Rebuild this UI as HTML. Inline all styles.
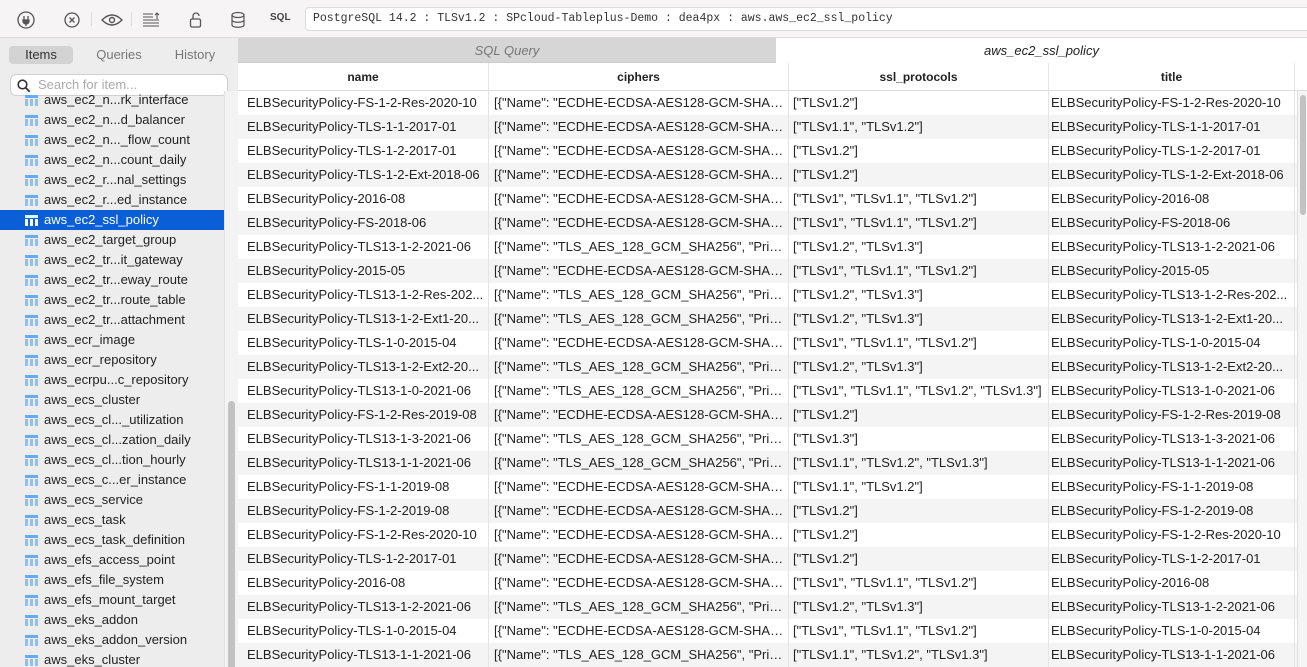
<!DOCTYPE html><html><head><style>
*{margin:0;padding:0;box-sizing:border-box}
body{width:1307px;height:667px;overflow:hidden;font-family:"Liberation Sans",sans-serif;font-size:13px;color:#222;background:#fff;position:relative}
.tb{position:absolute;left:0;top:0;width:1307px;height:38px;background:#f6f4f4;border-bottom:1px solid #dcdcdc}
.ic{position:absolute;top:10px}
.addr{position:absolute;left:305px;top:7px;width:1010px;height:24px;background:#fff;border:1px solid #dcdcdc;border-radius:4px;font-family:"Liberation Mono",monospace;font-size:11.5px;line-height:22px;padding-left:7px;color:#333}
.sb{position:absolute;left:0;top:38px;width:238px;height:629px;background:#ededed;overflow:hidden}
.tabs{position:absolute;top:8px;left:9px;width:220px;height:18px}
.tabs span{position:absolute;top:0;height:18px;line-height:18px;text-align:center;color:#777;font-size:13px}
.search{position:absolute;left:10px;top:36px;width:218px;height:22px;background:#fff;border:1px solid #d0d0d0;border-radius:6px;color:#aaa;line-height:20px;padding-left:27px}
.list{position:absolute;top:52px;left:0;width:224px}
.it{height:20px;line-height:20px;padding-left:44px;position:relative;font-size:13px;color:#222;white-space:nowrap}
.it i{position:absolute;left:25px;top:5px;width:13px;height:11px;background:linear-gradient(#6aaaf0,#6aaaf0) 0 0/13px 3px no-repeat,repeating-linear-gradient(90deg,#8fbff3 0 3px,transparent 3px 5px) 0 4px/13px 7px no-repeat}
.it.sel{background:#0a5fd6;color:#fff}
.strack{position:absolute;left:224px;top:53px;width:14px;height:580px;background:#f3f3f3;border-left:1px solid #e2e2e2}
.thumb{position:absolute;left:228px;top:363px;width:7px;height:270px;background:#c2c2c2;border-radius:4px}
.main{position:absolute;left:238px;top:38px;width:1069px;height:629px}
.tab1{position:absolute;left:0;top:0;width:538px;height:25px;background:#d6d6d6;color:#777;font-style:italic;text-align:center;line-height:25px;border-bottom:1px solid #ccc}
.tab2{position:absolute;left:538px;top:0;width:531px;height:25px;background:#fff;font-style:italic;text-align:center;line-height:25px;color:#222}
.hd{position:absolute;left:0;top:25px;width:1069px;height:28px;border-bottom:1px solid #ddd;background:#fff}
.hd span{position:absolute;top:0;line-height:28px;text-align:center;font-weight:bold;font-size:12px;border-right:1px solid #e4e4e4;height:28px}
.rows{position:absolute;left:0;top:53px;width:1060px}
.r{height:24px;position:relative;white-space:nowrap}
.r:nth-child(even){background:#f3f4f3}
.r span{position:absolute;top:0;line-height:24px;overflow:hidden;text-overflow:ellipsis;padding-left:9px;padding-right:4px;border-right:1px solid #e4e4e4;height:24px}
.c1{left:0;width:251px}.c2{left:251px;width:300px;padding-left:5px!important}.c3{left:551px;width:260px;padding-left:4px!important}.c4{left:811px;width:246px;padding-left:2px!important}
.vs{position:absolute;left:1297px;top:91px;width:10px;height:576px;background:#f5f5f5;border-left:1px solid #e0e0e0}
.vs div{position:absolute;left:2px;top:4px;width:6px;height:120px;background:#c2c2c2;border-radius:3px}
</style></head><body>
<div class="tb">
<svg class="ic" style="left:16px" width="20" height="20" viewBox="0 0 20 20"><circle cx="10" cy="10" r="8" fill="none" stroke="#555" stroke-width="1.3"/><path d="M8 6v4M12 6v4M7 10h6v1a3 3 0 0 1-6 0zM10 14v2" stroke="#555" stroke-width="1.3" fill="#555"/></svg>
<svg class="ic" style="left:62px" width="20" height="20" viewBox="0 0 20 20"><circle cx="10" cy="10" r="7" fill="none" stroke="#555" stroke-width="1.3"/><path d="M7.5 7.5l5 5M12.5 7.5l-5 5" stroke="#555" stroke-width="1.3"/></svg>
<div style="position:absolute;left:91px;top:12px;width:1px;height:14px;background:#ddd"></div>
<svg class="ic" style="left:100px" width="24" height="20" viewBox="0 0 24 20"><path d="M2 10q10-10 20 0q-10 10-20 0z" fill="none" stroke="#555" stroke-width="1.4"/><circle cx="12" cy="10" r="2.5" fill="none" stroke="#555" stroke-width="1.4"/></svg>
<div style="position:absolute;left:131px;top:12px;width:1px;height:14px;background:#ddd"></div>
<svg class="ic" style="left:142px" width="20" height="20" viewBox="0 0 20 20"><path d="M1 4h10M1 7h10M1 10h16M1 13h16M1 16h16M15 9V3M13 5l2-2 2 2" stroke="#555" stroke-width="1.1" fill="none"/></svg>
<svg class="ic" style="left:188px" width="16" height="20" viewBox="0 0 16 20"><rect x="2.5" y="9" width="10" height="8" rx="1.5" fill="none" stroke="#555" stroke-width="1.3"/><path d="M5 9V6a3 3 0 0 1 6 0" fill="none" stroke="#555" stroke-width="1.3"/></svg>
<svg class="ic" style="left:229px" width="18" height="20" viewBox="0 0 18 20"><ellipse cx="9" cy="5" rx="6" ry="2.5" fill="none" stroke="#555" stroke-width="1.2"/><path d="M3 5v10c0 3 12 3 12 0V5M3 10c0 3 12 3 12 0" fill="none" stroke="#555" stroke-width="1.2"/></svg>
<div style="position:absolute;left:270px;top:12px;font-size:10px;font-weight:bold;color:#444">SQL</div>
<div class="addr">PostgreSQL 14.2 : TLSv1.2 : SPcloud-Tableplus-Demo : dea4px : aws.aws_ec2_ssl_policy</div>
</div>
<div class="sb">
<div class="tabs"><span style="left:0;width:64px;background:#d3d3d3;border-radius:4px;color:#333">Items</span><span style="left:78px;width:64px">Queries</span><span style="left:154px;width:64px">History</span></div>
<div class="search"><svg style="position:absolute;left:6px;top:4px" width="14" height="14" viewBox="0 0 14 14"><circle cx="5.5" cy="5.5" r="4.3" fill="none" stroke="#333" stroke-width="1.6"/><path d="M8.7 8.7l4 4" stroke="#333" stroke-width="1.8"/></svg>Search for item...</div>
<div class="strack"></div><div class="thumb"></div>
<div class="list">
<div class="it"><i></i>aws_ec2_n...rk_interface</div>
<div class="it"><i></i>aws_ec2_n...d_balancer</div>
<div class="it"><i></i>aws_ec2_n..._flow_count</div>
<div class="it"><i></i>aws_ec2_n...count_daily</div>
<div class="it"><i></i>aws_ec2_r...nal_settings</div>
<div class="it"><i></i>aws_ec2_r...ed_instance</div>
<div class="it sel"><i style="filter:brightness(2)"></i>aws_ec2_ssl_policy</div>
<div class="it"><i></i>aws_ec2_target_group</div>
<div class="it"><i></i>aws_ec2_tr...it_gateway</div>
<div class="it"><i></i>aws_ec2_tr...eway_route</div>
<div class="it"><i></i>aws_ec2_tr...route_table</div>
<div class="it"><i></i>aws_ec2_tr...attachment</div>
<div class="it"><i></i>aws_ecr_image</div>
<div class="it"><i></i>aws_ecr_repository</div>
<div class="it"><i></i>aws_ecrpu...c_repository</div>
<div class="it"><i></i>aws_ecs_cluster</div>
<div class="it"><i></i>aws_ecs_cl..._utilization</div>
<div class="it"><i></i>aws_ecs_cl...zation_daily</div>
<div class="it"><i></i>aws_ecs_cl...tion_hourly</div>
<div class="it"><i></i>aws_ecs_c...er_instance</div>
<div class="it"><i></i>aws_ecs_service</div>
<div class="it"><i></i>aws_ecs_task</div>
<div class="it"><i></i>aws_ecs_task_definition</div>
<div class="it"><i></i>aws_efs_access_point</div>
<div class="it"><i></i>aws_efs_file_system</div>
<div class="it"><i></i>aws_efs_mount_target</div>
<div class="it"><i></i>aws_eks_addon</div>
<div class="it"><i></i>aws_eks_addon_version</div>
<div class="it"><i></i>aws_eks_cluster</div>
</div>
</div>
<div class="main">
<div class="tab1">SQL Query</div><div class="tab2">aws_ec2_ssl_policy</div>
<div class="hd"><span style="left:0;width:251px">name</span><span style="left:251px;width:300px">ciphers</span><span style="left:551px;width:260px">ssl_protocols</span><span style="left:811px;width:246px">title</span></div>
<div class="rows">
<div class="r"><span class="c1">ELBSecurityPolicy-FS-1-2-Res-2020-10</span><span class="c2">[{"Name": "ECDHE-ECDSA-AES128-GCM-SHA25...</span><span class="c3">["TLSv1.2"]</span><span class="c4">ELBSecurityPolicy-FS-1-2-Res-2020-10</span></div>
<div class="r"><span class="c1">ELBSecurityPolicy-TLS-1-1-2017-01</span><span class="c2">[{"Name": "ECDHE-ECDSA-AES128-GCM-SHA25...</span><span class="c3">["TLSv1.1", "TLSv1.2"]</span><span class="c4">ELBSecurityPolicy-TLS-1-1-2017-01</span></div>
<div class="r"><span class="c1">ELBSecurityPolicy-TLS-1-2-2017-01</span><span class="c2">[{"Name": "ECDHE-ECDSA-AES128-GCM-SHA25...</span><span class="c3">["TLSv1.2"]</span><span class="c4">ELBSecurityPolicy-TLS-1-2-2017-01</span></div>
<div class="r"><span class="c1">ELBSecurityPolicy-TLS-1-2-Ext-2018-06</span><span class="c2">[{"Name": "ECDHE-ECDSA-AES128-GCM-SHA25...</span><span class="c3">["TLSv1.2"]</span><span class="c4">ELBSecurityPolicy-TLS-1-2-Ext-2018-06</span></div>
<div class="r"><span class="c1">ELBSecurityPolicy-2016-08</span><span class="c2">[{"Name": "ECDHE-ECDSA-AES128-GCM-SHA25...</span><span class="c3">["TLSv1", "TLSv1.1", "TLSv1.2"]</span><span class="c4">ELBSecurityPolicy-2016-08</span></div>
<div class="r"><span class="c1">ELBSecurityPolicy-FS-2018-06</span><span class="c2">[{"Name": "ECDHE-ECDSA-AES128-GCM-SHA25...</span><span class="c3">["TLSv1", "TLSv1.1", "TLSv1.2"]</span><span class="c4">ELBSecurityPolicy-FS-2018-06</span></div>
<div class="r"><span class="c1">ELBSecurityPolicy-TLS13-1-2-2021-06</span><span class="c2">[{"Name": "TLS_AES_128_GCM_SHA256", "Priori...</span><span class="c3">["TLSv1.2", "TLSv1.3"]</span><span class="c4">ELBSecurityPolicy-TLS13-1-2-2021-06</span></div>
<div class="r"><span class="c1">ELBSecurityPolicy-2015-05</span><span class="c2">[{"Name": "ECDHE-ECDSA-AES128-GCM-SHA25...</span><span class="c3">["TLSv1", "TLSv1.1", "TLSv1.2"]</span><span class="c4">ELBSecurityPolicy-2015-05</span></div>
<div class="r"><span class="c1">ELBSecurityPolicy-TLS13-1-2-Res-202...</span><span class="c2">[{"Name": "TLS_AES_128_GCM_SHA256", "Priori...</span><span class="c3">["TLSv1.2", "TLSv1.3"]</span><span class="c4">ELBSecurityPolicy-TLS13-1-2-Res-202...</span></div>
<div class="r"><span class="c1">ELBSecurityPolicy-TLS13-1-2-Ext1-20...</span><span class="c2">[{"Name": "TLS_AES_128_GCM_SHA256", "Priori...</span><span class="c3">["TLSv1.2", "TLSv1.3"]</span><span class="c4">ELBSecurityPolicy-TLS13-1-2-Ext1-20...</span></div>
<div class="r"><span class="c1">ELBSecurityPolicy-TLS-1-0-2015-04</span><span class="c2">[{"Name": "ECDHE-ECDSA-AES128-GCM-SHA25...</span><span class="c3">["TLSv1", "TLSv1.1", "TLSv1.2"]</span><span class="c4">ELBSecurityPolicy-TLS-1-0-2015-04</span></div>
<div class="r"><span class="c1">ELBSecurityPolicy-TLS13-1-2-Ext2-20...</span><span class="c2">[{"Name": "TLS_AES_128_GCM_SHA256", "Priori...</span><span class="c3">["TLSv1.2", "TLSv1.3"]</span><span class="c4">ELBSecurityPolicy-TLS13-1-2-Ext2-20...</span></div>
<div class="r"><span class="c1">ELBSecurityPolicy-TLS13-1-0-2021-06</span><span class="c2">[{"Name": "TLS_AES_128_GCM_SHA256", "Priori...</span><span class="c3">["TLSv1", "TLSv1.1", "TLSv1.2", "TLSv1.3"]</span><span class="c4">ELBSecurityPolicy-TLS13-1-0-2021-06</span></div>
<div class="r"><span class="c1">ELBSecurityPolicy-FS-1-2-Res-2019-08</span><span class="c2">[{"Name": "ECDHE-ECDSA-AES128-GCM-SHA25...</span><span class="c3">["TLSv1.2"]</span><span class="c4">ELBSecurityPolicy-FS-1-2-Res-2019-08</span></div>
<div class="r"><span class="c1">ELBSecurityPolicy-TLS13-1-3-2021-06</span><span class="c2">[{"Name": "TLS_AES_128_GCM_SHA256", "Priori...</span><span class="c3">["TLSv1.3"]</span><span class="c4">ELBSecurityPolicy-TLS13-1-3-2021-06</span></div>
<div class="r"><span class="c1">ELBSecurityPolicy-TLS13-1-1-2021-06</span><span class="c2">[{"Name": "TLS_AES_128_GCM_SHA256", "Priori...</span><span class="c3">["TLSv1.1", "TLSv1.2", "TLSv1.3"]</span><span class="c4">ELBSecurityPolicy-TLS13-1-1-2021-06</span></div>
<div class="r"><span class="c1">ELBSecurityPolicy-FS-1-1-2019-08</span><span class="c2">[{"Name": "ECDHE-ECDSA-AES128-GCM-SHA25...</span><span class="c3">["TLSv1.1", "TLSv1.2"]</span><span class="c4">ELBSecurityPolicy-FS-1-1-2019-08</span></div>
<div class="r"><span class="c1">ELBSecurityPolicy-FS-1-2-2019-08</span><span class="c2">[{"Name": "ECDHE-ECDSA-AES128-GCM-SHA25...</span><span class="c3">["TLSv1.2"]</span><span class="c4">ELBSecurityPolicy-FS-1-2-2019-08</span></div>
<div class="r"><span class="c1">ELBSecurityPolicy-FS-1-2-Res-2020-10</span><span class="c2">[{"Name": "ECDHE-ECDSA-AES128-GCM-SHA25...</span><span class="c3">["TLSv1.2"]</span><span class="c4">ELBSecurityPolicy-FS-1-2-Res-2020-10</span></div>
<div class="r"><span class="c1">ELBSecurityPolicy-TLS-1-2-2017-01</span><span class="c2">[{"Name": "ECDHE-ECDSA-AES128-GCM-SHA25...</span><span class="c3">["TLSv1.2"]</span><span class="c4">ELBSecurityPolicy-TLS-1-2-2017-01</span></div>
<div class="r"><span class="c1">ELBSecurityPolicy-2016-08</span><span class="c2">[{"Name": "ECDHE-ECDSA-AES128-GCM-SHA25...</span><span class="c3">["TLSv1", "TLSv1.1", "TLSv1.2"]</span><span class="c4">ELBSecurityPolicy-2016-08</span></div>
<div class="r"><span class="c1">ELBSecurityPolicy-TLS13-1-2-2021-06</span><span class="c2">[{"Name": "TLS_AES_128_GCM_SHA256", "Priori...</span><span class="c3">["TLSv1.2", "TLSv1.3"]</span><span class="c4">ELBSecurityPolicy-TLS13-1-2-2021-06</span></div>
<div class="r"><span class="c1">ELBSecurityPolicy-TLS-1-0-2015-04</span><span class="c2">[{"Name": "ECDHE-ECDSA-AES128-GCM-SHA25...</span><span class="c3">["TLSv1", "TLSv1.1", "TLSv1.2"]</span><span class="c4">ELBSecurityPolicy-TLS-1-0-2015-04</span></div>
<div class="r"><span class="c1">ELBSecurityPolicy-TLS13-1-1-2021-06</span><span class="c2">[{"Name": "TLS_AES_128_GCM_SHA256", "Priori...</span><span class="c3">["TLSv1.1", "TLSv1.2", "TLSv1.3"]</span><span class="c4">ELBSecurityPolicy-TLS13-1-1-2021-06</span></div>
</div>
</div>
<div class="vs"><div></div></div>
</body></html>
